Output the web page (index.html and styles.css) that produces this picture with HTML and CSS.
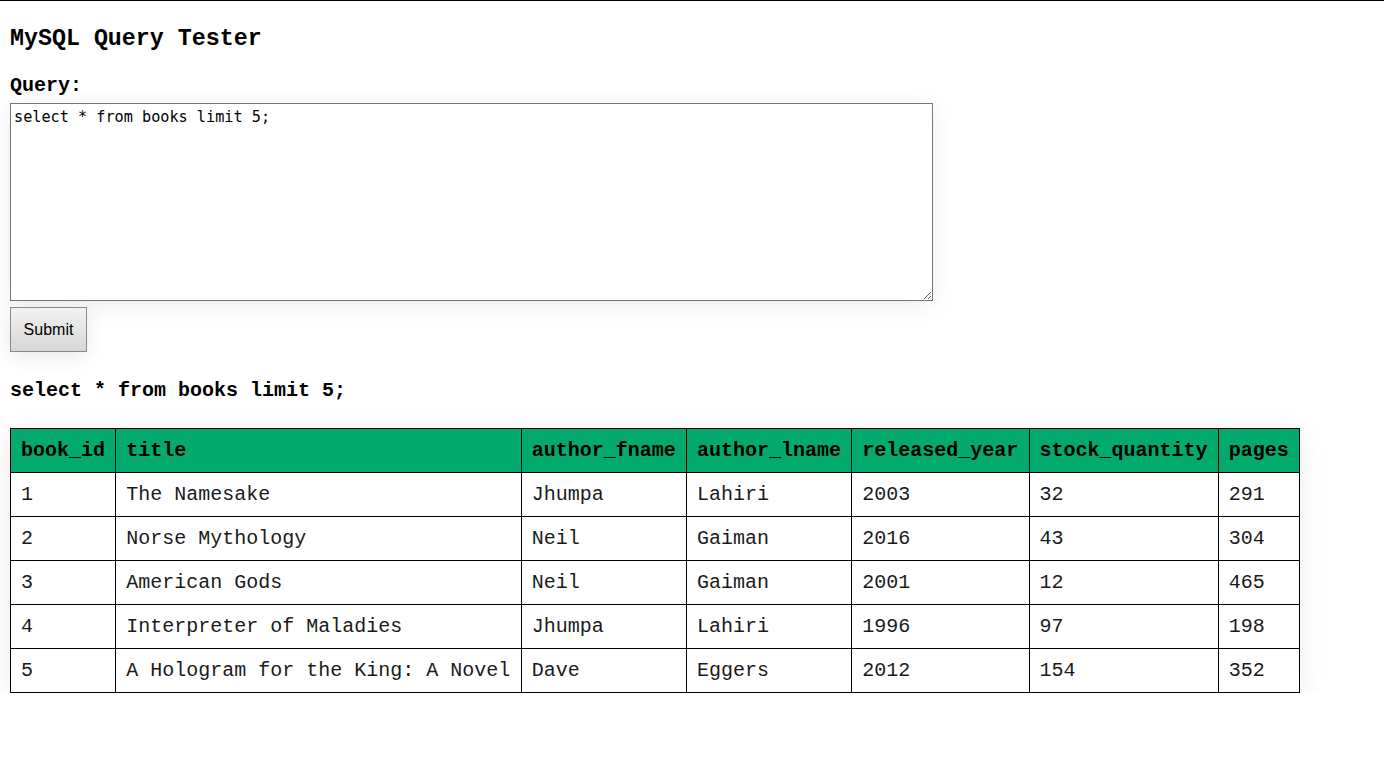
FILE: index.html
```html
<!DOCTYPE html>
<html>
<head>
<meta charset="utf-8">
<title>MySQL Query Tester</title>
<link rel="stylesheet" href="styles.css">
</head>
<body>
<h2 class="title">MySQL Query Tester</h2>
<form class="query-form">
  <label class="query-label" for="q">Query:</label>
  <textarea id="q" class="query-input">select * from books limit 5;</textarea>
  <button type="button" class="submit-btn">Submit</button>
</form>
<h3 class="executed">select * from books limit 5;</h3>
<table class="results">
  <thead>
    <tr><th>book_id</th><th>title</th><th>author_fname</th><th>author_lname</th><th>released_year</th><th>stock_quantity</th><th>pages</th></tr>
  </thead>
  <tbody>
    <tr><td>1</td><td>The Namesake</td><td>Jhumpa</td><td>Lahiri</td><td>2003</td><td>32</td><td>291</td></tr>
    <tr><td>2</td><td>Norse Mythology</td><td>Neil</td><td>Gaiman</td><td>2016</td><td>43</td><td>304</td></tr>
    <tr><td>3</td><td>American Gods</td><td>Neil</td><td>Gaiman</td><td>2001</td><td>12</td><td>465</td></tr>
    <tr><td>4</td><td>Interpreter of Maladies</td><td>Jhumpa</td><td>Lahiri</td><td>1996</td><td>97</td><td>198</td></tr>
    <tr><td>5</td><td>A Hologram for the King: A Novel</td><td>Dave</td><td>Eggers</td><td>2012</td><td>154</td><td>352</td></tr>
  </tbody>
</table>
</body>
</html>
```
FILE: styles.css
```css
html {
  border-top: 1px solid #000;
  background: #fff;
}
body {
  margin: 0;
  padding: 0 10px;
  font-family: "Liberation Mono", "Courier New", monospace;
  font-size: 20px;
  color: #000;
}
.title {
  font-size: 23.3px;
  line-height: 30px;
  margin: 23px 0 0;
  font-weight: bold;
}
.query-form {
  display: flex;
  flex-direction: column;
  align-items: flex-start;
  margin-top: 20px;
}
.query-label {
  font-weight: bold;
  font-size: 20px;
  line-height: 24px;
  margin-bottom: 5px;
}
.query-input {
  box-sizing: border-box;
  width: 923px;
  height: 198px;
  margin: 0;
  padding: 4px 3px 3px;
  border: 1px solid #767676;
  font-family: "DejaVu Sans Mono", monospace;
  font-size: 15.2px;
  line-height: 18px;
  color: #000;
  resize: both;
  box-shadow: 0 4px 24px rgba(0, 0, 0, 0.08);
}
.submit-btn {
  box-sizing: border-box;
  margin-top: 6px;
  width: 77px;
  height: 45px;
  padding: 0;
  border: 1px solid #8a8a8a;
  background: linear-gradient(#f2f2f2, #d6d6d6);
  font-family: "Liberation Sans", Arial, sans-serif;
  font-size: 16px;
  color: #000;
  box-shadow: 0 4px 20px rgba(0, 0, 0, 0.1);
}
.executed {
  font-size: 20px;
  line-height: 24px;
  margin: 27px 0 0;
  font-weight: bold;
}
.results {
  margin-top: 25px;
  width: 1290px;
  border-collapse: collapse;
  border: 1px solid #000;
  box-shadow: 0 6px 28px rgba(0, 0, 0, 0.08);
}
.results th,
.results td {
  border: 1px solid #000;
  padding: 10px 10px;
  line-height: 23px;
  text-align: left;
  white-space: nowrap;
  font-size: 20px;
}
.results th {
  background: #04a96d;
  font-weight: bold;
  color: #000;
}
.results td {
  font-weight: normal;
  color: #1a1a1a;
}
```
